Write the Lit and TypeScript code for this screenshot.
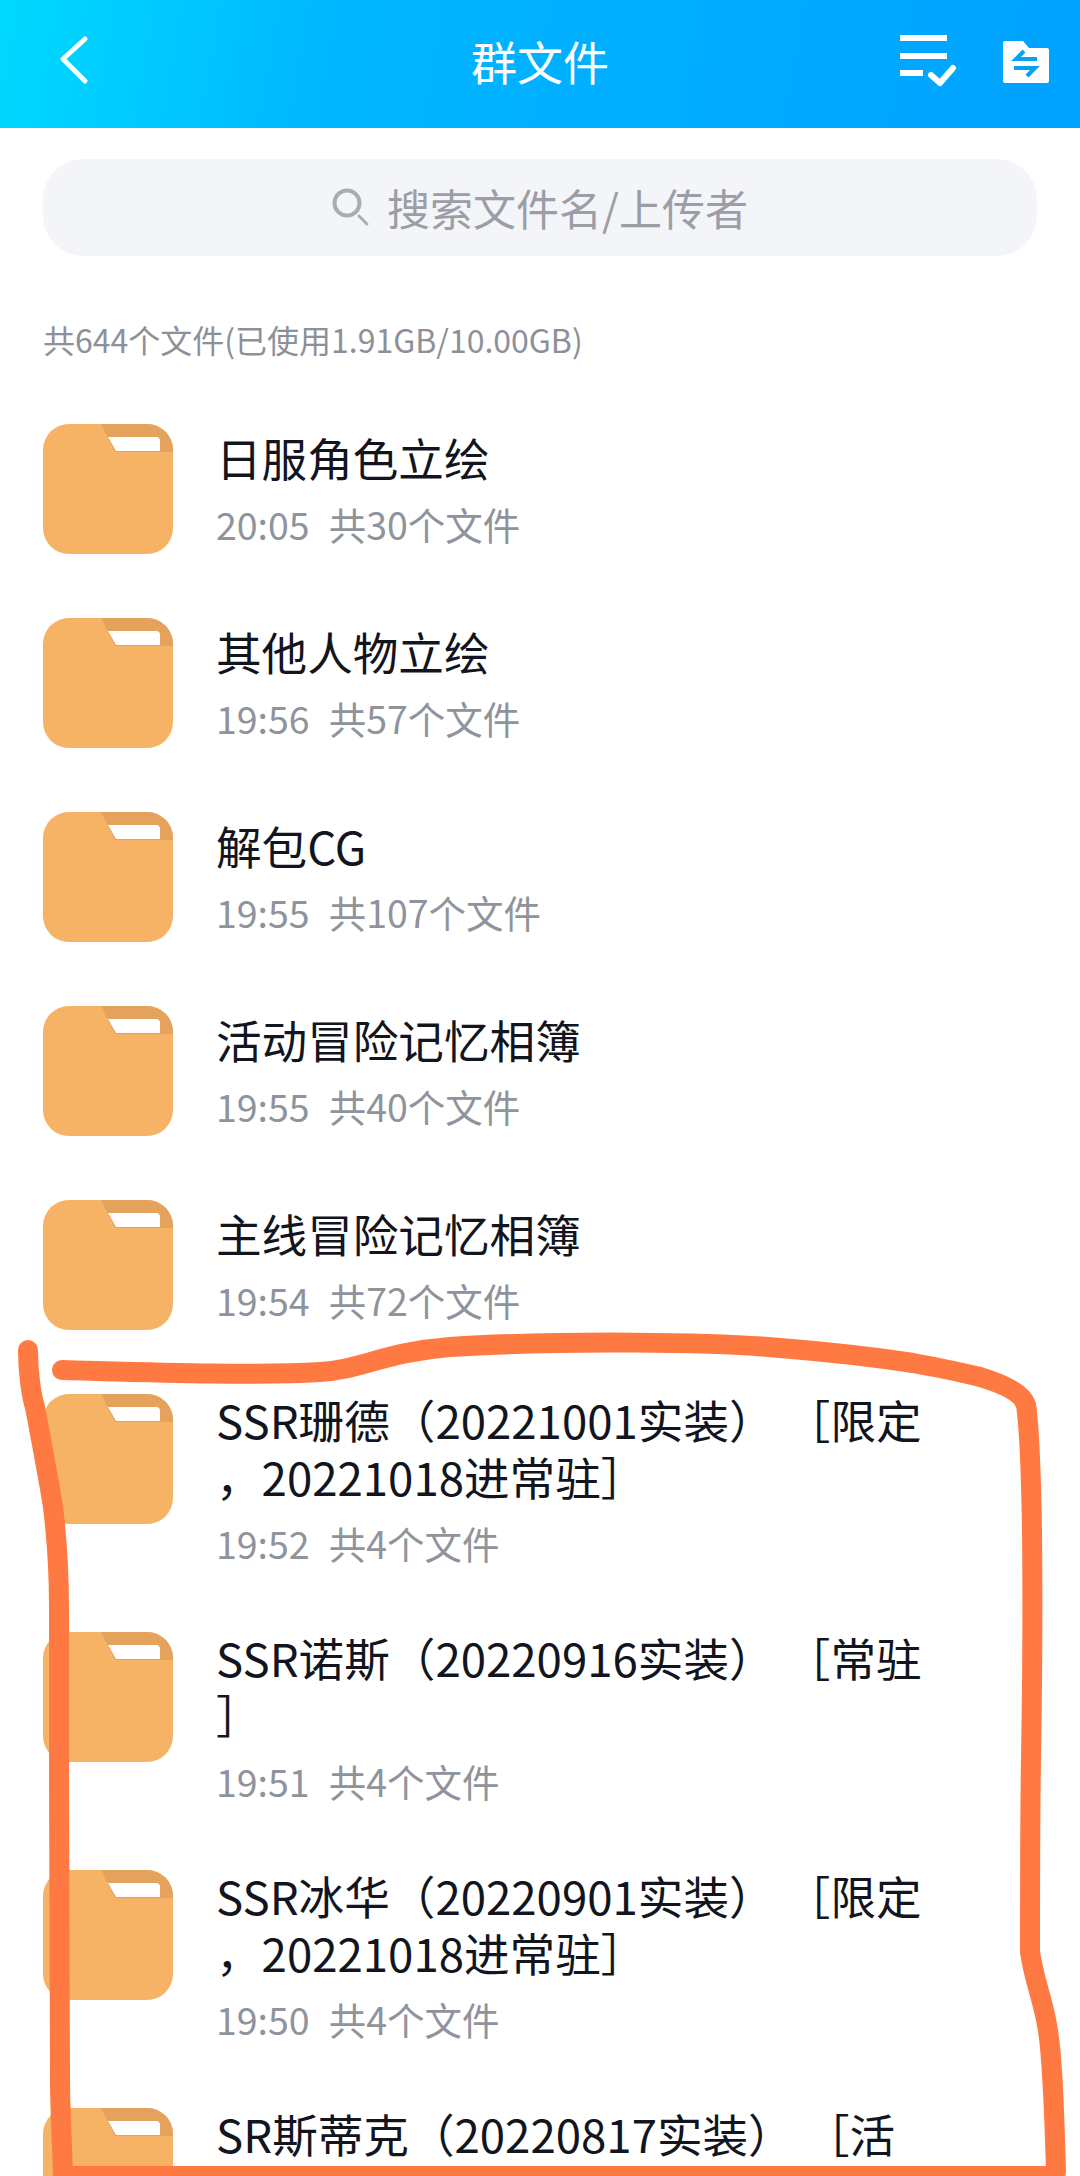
import { LitElement, html, css, svg } from "lit";
import { customElement } from "lit/decorators.js";
import { classMap } from "lit/directives/class-map.js";

interface Row { lines: string[]; time?: string; count?: string }

const ROWS: Row[] = [
  { lines: ["日服角色立绘"], time: "20:05", count: "共30个文件" },
  { lines: ["其他人物立绘"], time: "19:56", count: "共57个文件" },
  { lines: ["解包CG"], time: "19:55", count: "共107个文件" },
  { lines: ["活动冒险记忆相簿"], time: "19:55", count: "共40个文件" },
  { lines: ["主线冒险记忆相簿"], time: "19:54", count: "共72个文件" },
  { lines: ["SSR珊德（20221001实装） ［限定", "，20221018进常驻］"], time: "19:52", count: "共4个文件" },
  { lines: ["SSR诺斯（20220916实装） ［常驻", "］"], time: "19:51", count: "共4个文件" },
  { lines: ["SSR冰华（20220901实装） ［限定", "，20221018进常驻］"], time: "19:50", count: "共4个文件" },
  { lines: ["SR斯蒂克（20220817实装） ［活"] },
];

const folder = svg`<svg class="folder" viewBox="0 0 130 130" width="130" height="130">
  <rect width="130" height="130" rx="26" fill="#f6b265"/>
  <path d="M58 0H104A26 26 0 0 1 130 26V28H72Z" fill="#e4a25d"/>
  <path d="M65 13H113Q117 13 117 17V27H73Z" fill="#fff"/>
</svg>`;

@customElement("app-root")
export class AppRoot extends LitElement {
  static styles = css`
    :host {
      display: block;
      position: relative;
      width: 1080px;
      height: 2176px;
      overflow: hidden;
      background: #fff;
      font-family: "Noto Sans CJK SC", "Noto Sans", sans-serif;
    }
    .header {
      box-sizing: border-box;
      height: 128px;
      padding-bottom: 8px;
      display: flex;
      align-items: center;
      background: linear-gradient(100deg, #00d9ff 0%, #00b6ff 32%, #00a2ff 100%);
      color: #fff;
    }
    .side { flex: 1; display: flex; align-items: center; }
    .side.right { justify-content: flex-end; }
    .back { margin-left: 56px; display: block; }
    .actions { margin-right: 28px; display: block; }
    .title { font-size: 46px; line-height: 60px; }
    .search {
      margin: 31px 43px 0;
      height: 97px;
      border-radius: 40px;
      background: #f4f5f9;
      display: flex;
      align-items: center;
      justify-content: center;
      gap: 17px;
      color: #9b9ea6;
      font-size: 43px;
      line-height: 60px;
    }
    .search span { position: relative; top: -1px; }
    .summary {
      margin: 60px 43px 62px;
      height: 46px;
      font-size: 32px;
      line-height: 46px;
      color: #8d9099;
    }
    .row {
      display: flex;
      gap: 43px;
      min-height: 194px;
      padding: 0 43px;
    }
    .folder { flex: none; display: block; }
    .text {
      display: flex;
      flex-direction: column;
      justify-content: center;
      min-height: 133px;
      margin: -3px 0 66px;
      min-width: 0;
      align-self: flex-start;
    }
    .text.single { margin-bottom: 60px; }
    .text.cut { justify-content: flex-start; }
    .name {
      font-size: 45.6px;
      line-height: 57px;
      color: #12151e;
      white-space: pre;
    }
    .meta {
      margin-top: 15px;
      font-size: 37.5px;
      line-height: 46px;
      color: #8f939c;
      display: flex;
      gap: 19px;
    }
    .stroke {
      position: absolute;
      left: 0;
      top: 0;
      pointer-events: none;
    }
  `;

  render() {
    return html`
      <div class="header">
        <div class="side">
          <svg class="back" width="36" height="54" viewBox="0 0 36 54" fill="none" stroke="#fff" stroke-width="5" stroke-linecap="round" stroke-linejoin="round">
            <path d="M29 6L7 26L29 48"/>
          </svg>
        </div>
        <div class="title">群文件</div>
        <div class="side right">
          <svg class="actions" width="156" height="60" viewBox="896 30 156 60" fill="none">
            <g stroke="#fff" stroke-width="6" stroke-linecap="butt">
              <path d="M900 38H947M900 56H947M900 73H923"/>
              <path d="M931 75L940 83L953 68" stroke-linecap="round" stroke-linejoin="round"/>
            </g>
            <path d="M1005 41H1023L1029 48H1047Q1049 48 1049 50V81Q1049 83 1047 83H1005Q1003 83 1003 81V43Q1003 41 1005 41Z" fill="#fff"/>
            <g stroke="#0aa0f0" stroke-width="4" stroke-linejoin="miter">
              <path d="M1037 59H1016L1024 51"/>
              <path d="M1014 68H1035L1027 76"/>
            </g>
          </svg>
        </div>
      </div>
      <div class="search">
        <svg width="38" height="40" viewBox="0 0 38 40" fill="none" stroke="#a9acb5" stroke-linecap="round">
          <circle cx="15" cy="15" r="12.5" stroke-width="4"/>
          <path d="M27 28L35 36" stroke-width="3"/>
        </svg>
        <span>搜索文件名/上传者</span>
      </div>
      <div class="summary">共644个文件(已使用1.91GB/10.00GB)</div>
      ${ROWS.map(
        (r) => html`<div class="row">
          ${folder}
          <div class=${classMap({ text: true, single: r.lines.length === 1, cut: !r.time })}>
            ${r.lines.map((l) => html`<div class="name">${l}</div>`)}
            ${r.time ? html`<div class="meta"><span>${r.time}</span><span>${r.count}</span></div>` : null}
          </div>
        </div>`
      )}
      <svg class="stroke" width="1080" height="2176" viewBox="0 0 1080 2176" fill="none" stroke="#ff7a42" stroke-width="20" stroke-linecap="round" stroke-linejoin="round">
        <path d="M62 1370C140 1372 250 1376 320 1372C360 1370 385 1352 450 1347C560 1340 720 1342 780 1348C830 1352 880 1358 913 1363C940 1368 960 1372 980 1377C1000 1383 1022 1392 1026 1405C1029 1425 1031 1470 1032 1530C1033 1620 1032 1700 1031 1758C1030 1820 1030 1890 1030 1952C1034 1980 1043 2000 1047 2025C1052 2050 1054 2100 1056 2172"/>
        <path d="M28 1350C28 1370 31 1395 35 1407C41 1440 48 1475 53 1507C57 1540 59 1570 59 1607C59 1760 59 1960 60 2080C60 2110 62 2140 63 2176H1056" stroke-linecap="butt"/>
        <circle cx="28" cy="1350" r="10" fill="#ff7a42" stroke="none"/>
      </svg>
    `;
  }
}
